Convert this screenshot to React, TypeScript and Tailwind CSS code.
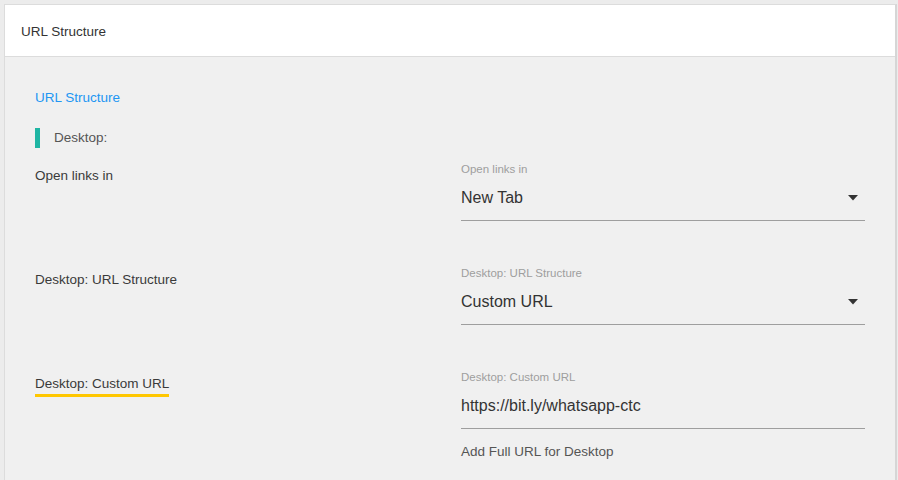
const font = { fontFamily: '"Liberation Sans", Arial, sans-serif' };

const Arrow = () => (
  <svg width="10" height="6" viewBox="0 0 10 6" className="shrink-0">
    <polygon points="0,0 10,0 5,5.5" fill="#333" />
  </svg>
);

type FieldProps = {
  label: string;
  value: string;
  select?: boolean;
  helper?: string;
};

const Field = ({ label, value, select, helper }: FieldProps) => (
  <div className="w-[404px]">
    <div className="text-[11.5px] leading-[14px] text-[#9e9e9e]">{label}</div>
    <div className="mt-[7px] pb-[7px] border-b border-[#9e9e9e] flex items-center justify-between pr-[7px]">
      <span className="text-[16px] leading-[30px] text-[#333]">{value}</span>
      {select && <Arrow />}
    </div>
    {helper && <div className="mt-[14px] text-[13.5px] leading-[18px] text-[#555]">{helper}</div>}
  </div>
);

const Row = ({
  title,
  highlight,
  children,
}: {
  title: string;
  highlight?: boolean;
  children: React.ReactNode;
}) => (
  <div className="flex">
    <div className="w-[426px] pt-[1px]">
      <span
        className={
          "inline-block text-[13.5px] leading-[18px] text-[#3a3a3a] " +
          (highlight ? "border-b-[3px] border-[#ffc700] pb-[1px]" : "")
        }
      >
        {title}
      </span>
    </div>
    {children}
  </div>
);

export default function App() {
  return (
    <div className="min-h-screen bg-[#ececec] pt-[4px] pl-[4px]" style={font}>
      <div className="w-[893px] h-[476px] bg-[#f0f0f0] border-t border-l border-[#dcdcdc] border-r-2 border-r-[#d6d6d6]">
        <div className="h-[52px] bg-white border-b border-[#dcdcdc] flex items-center pl-[16px] pt-[3px]">
          <span className="text-[13.5px] text-[#333]">URL Structure</span>
        </div>
        <div className="pl-[30px] pr-[30px] pt-[32px]">
          <div className="text-[13.5px] leading-[18px] text-[#2196f3]">URL Structure</div>
          <div className="mt-[21px] flex items-center h-[20px]">
            <div className="w-[5px] h-[20px] bg-[#1fb5a3]" />
            <span className="ml-[14px] text-[13.5px] text-[#555]">Desktop:</span>
          </div>
          <div className="mt-[14px] flex flex-col gap-[45px]">
            <Row title="Open links in">
              <Field label="Open links in" value="New Tab" select />
            </Row>
            <Row title="Desktop: URL Structure">
              <Field label="Desktop: URL Structure" value="Custom URL" select />
            </Row>
            <Row title="Desktop: Custom URL" highlight>
              <Field
                label="Desktop: Custom URL"
                value="https://bit.ly/whatsapp-ctc"
                helper="Add Full URL for Desktop"
              />
            </Row>
          </div>
        </div>
      </div>
    </div>
  );
}
